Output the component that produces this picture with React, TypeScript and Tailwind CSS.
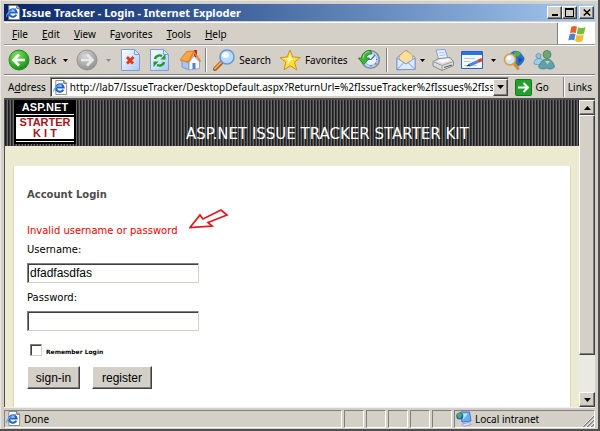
import type { ReactNode } from "react";

type IconProps = {
  className?: string;
};

const PageIcon: React.FC<IconProps> = (props) => {
  return (
    <svg className={props.className} viewBox="0 0 16 16" aria-hidden="true">
      <path d="M3 .5h8.500l3 3v12H3z" fill="#fffdf2" stroke="#8a8778" />
      <path d="M11.500.5v3h3" fill="#d8d4c4" stroke="#555" />
      <path
        d="M11 10.200A4 4 0 1 1 11.300 8H4.500"
        fill="none"
        stroke="#1f5fd0"
        strokeWidth="2.200"
      />
      <path d="M.8 12.500C0 10 5 4.500 11 3.500" fill="none" stroke="#59a6f5" strokeWidth="1.200" />
    </svg>
  );
};

const BackIcon: React.FC<IconProps & { disabled?: boolean }> = (props) => {
  const id = props.disabled ? "arrow-off" : "arrow-on";
  return (
    <svg className={props.className} viewBox="0 0 22 22" aria-hidden="true">
      <defs>
        <radialGradient id={id} cx=".4" cy=".3" r=".75">
          <stop offset="0" stopColor={props.disabled ? "#d6d6d6" : "#8be36a"} />
          <stop offset=".6" stopColor={props.disabled ? "#ababab" : "#36b32a"} />
          <stop offset="1" stopColor={props.disabled ? "#8e8e8e" : "#14801a"} />
        </radialGradient>
      </defs>
      <circle
        cx="11"
        cy="11"
        r="10"
        fill={`url(#${id})`}
        stroke={props.disabled ? "#949494" : "#2c8c27"}
      />
      <path
        d={props.disabled ? "M5 11h11M11 5.500l5.500 5.500-5.500 5.500" : "M17 11H6M11 5.500L5.500 11l5.500 5.500"}
        fill="none"
        stroke={props.disabled ? "#e8e8e8" : "#fff"}
        strokeWidth="2.600"
      />
    </svg>
  );
};

const SheetIcon: React.FC<{ children: ReactNode }> = (props) => {
  return (
    <svg className="h-[22px] w-[19px]" viewBox="0 0 19 22" aria-hidden="true">
      <defs>
        <linearGradient id="sheet" x1="0" y1="0" x2="1" y2="1">
          <stop offset="0" stopColor="#ffffff" />
          <stop offset="1" stopColor="#a9c8f5" />
        </linearGradient>
      </defs>
      <path d="M.5.5h13l5 5v16H.5z" fill="url(#sheet)" stroke="#7f9ed6" />
      <path d="M13.500.5v5h5z" fill="#dbe8fc" stroke="#7f9ed6" />
      {props.children}
    </svg>
  );
};

const HomeIcon = () => {
  return (
    <svg className="h-[22px] w-[22px]" viewBox="0 0 22 22" aria-hidden="true">
      <path d="M15 1h3v7h-3z" fill="#c5281c" />
      <path d="M3 11l7 3v7l-7-3z" fill="#a8c4ee" stroke="#6d8fc9" strokeWidth=".8" />
      <path d="M10 13l5-6 5.500 6v6.500L10 21z" fill="#f3f7ff" stroke="#7c98cb" strokeWidth=".8" />
      <path d="M13.500 14h3v6h-3z" fill="#5c7fc4" />
      <path d="M1 11l6.500-8.500L15 2l-6 11z" fill="#f7a742" stroke="#d9731a" strokeWidth=".8" />
      <path d="M9 13.500L15 3l6.500 9.500" fill="none" stroke="#e8832a" strokeWidth="1.600" />
    </svg>
  );
};

const SearchIcon = () => {
  return (
    <svg className="h-[22px] w-[22px]" viewBox="0 0 22 22" aria-hidden="true">
      <path d="M2 20l7-7" stroke="#a35a1c" strokeWidth="4" strokeLinecap="round" />
      <path d="M2 19.500l6-6" stroke="#f1a95a" strokeWidth="1.800" strokeLinecap="round" />
      <circle cx="14" cy="8" r="7" fill="#b9dcfb" stroke="#6d95d8" strokeWidth="1.600" />
      <ellipse cx="12.500" cy="6" rx="3.500" ry="3" fill="#f2faff" />
    </svg>
  );
};

const StarIcon = () => {
  return (
    <svg className="h-[22px] w-[22px]" viewBox="0 0 22 22" aria-hidden="true">
      <path
        d="M11 1l2.800 7 7.500.6-5.800 4.600 2.300 7.800-6.600-4.300L5 21l1.800-7.800L1 8.600 8.200 8z"
        fill="#ffdc3c"
        stroke="#cf9410"
        strokeLinejoin="round"
      />
      <path d="M11 4l1.500 5.500 4 .5-5 1.500-3 4 .3-4.500-4-1.500 5-.5z" fill="#fff6a8" />
    </svg>
  );
};

const HistoryIcon = () => {
  return (
    <svg className="h-[22px] w-[22px]" viewBox="0 0 22 22" aria-hidden="true">
      <circle cx="12.500" cy="10.500" r="8.800" fill="#b9d4f2" stroke="#7d8ea6" strokeWidth="1.600" />
      <circle cx="13" cy="10.500" r="6" fill="#e6f2ff" stroke="#8fb2e0" strokeWidth="1" />
      <path d="M13 10.500l4-4.500M13 10.500h-3M18 10.500h1M13 16v1.500" stroke="#4b6fae" strokeWidth="1.200" />
      <path d="M17 14l1.500 1.500" stroke="#e2563a" strokeWidth="1.500" />
      <path
        d="M13 1.500C7.500 1 4 4.500 3.500 9H.3l5.500 6.500L11.500 9H8.500c0-2.500 2-4 5-4z"
        fill="#3db53a"
        stroke="#1d7c20"
        strokeWidth=".8"
      />
      <path d="M11 2.800C7.500 3 5.300 5.500 5 9.500" fill="none" stroke="#a6e690" strokeWidth="1" />
    </svg>
  );
};

const MailIcon = () => {
  return (
    <svg className="h-[22px] w-5" viewBox="0 0 20 22" aria-hidden="true">
      <path d="M1 8.500L10 1l9 7.500v11.500l-18 1z" fill="#cfe0fb" stroke="#7b98d4" />
      <path d="M3.500 7l6-5.500 7 4.500v6l-7 3-6-3z" fill="#ffdf9a" stroke="#dba64d" strokeWidth=".8" />
      <path d="M1 9l9 6 9-6v11.500H1z" fill="#dcebff" stroke="#7b98d4" />
      <path d="M1 20.500l7-7M19 20.500l-7-7" stroke="#7b98d4" />
    </svg>
  );
};

const PrintIcon = () => {
  return (
    <svg className="h-[22px] w-[22px]" viewBox="0 0 22 22" aria-hidden="true">
      <path d="M4 1l9-.5 3 9-9 2z" fill="#e9f2ff" stroke="#7fa0dc" />
      <path d="M6.500 4l6-.7M7.500 6.500l6-.7" stroke="#a9c2ec" />
      <path d="M1 12.500l6-3 11-1 3.500 4v4L10 21.500 1 17z" fill="#dcdcdc" stroke="#8a8a8a" />
      <path d="M1 12.500l9 4 11.500-4M10 16.500v5" fill="none" stroke="#9c9c9c" />
      <path d="M5 12l3-1.500 8.500-1 2 2-8 2.500z" fill="#f8f8f8" />
      <path d="M12 18.500l8-2.500" stroke="#555" />
    </svg>
  );
};

const EditIcon = () => {
  return (
    <svg className="h-[18px] w-[22px]" viewBox="0 0 22 18" aria-hidden="true">
      <path d="M.5.500h21v17H.5z" fill="#f4f9ff" stroke="#2163c8" />
      <path d="M1 1h20v3H1z" fill="#2874e0" />
      <path d="M3 7.500h11M3 10.500h6M3 14.500h13" stroke="#b6c6dc" />
      <path d="M8 14.300l9-4" stroke="#4a86e0" strokeWidth="3" />
      <path d="M17 10.300l4-1.800" stroke="#e0402a" strokeWidth="3.200" />
      <path d="M5 15.500l3-2.500 1 2z" fill="#333" />
    </svg>
  );
};

const ResearchIcon = () => {
  return (
    <svg className="h-[22px] w-[22px]" viewBox="0 0 22 22" aria-hidden="true">
      <path d="M6 6C8 2 14 0 18 4l3.500 5c.5 3-4 8-7 8.500L8 14z" fill="#2b6fc9" />
      <path d="M11 3.500L14 2l4 2.500-3 3-4-.5z" fill="#54ad4e" />
      <path d="M15 9l5 1-4 4z" fill="#1c4f9e" />
      <path d="M11.500 15l3.500 4.500" stroke="#d98c25" strokeWidth="3" strokeLinecap="round" />
      <circle cx="7" cy="10.500" r="5.500" fill="#cfe6fb" stroke="#e09f3c" strokeWidth="1.600" />
      <ellipse cx="6" cy="9" rx="2.500" ry="2" fill="#fff" />
    </svg>
  );
};

const MessengerIcon = () => {
  return (
    <svg className="h-5 w-[22px]" viewBox="0 0 22 20" aria-hidden="true">
      <circle cx="5.500" cy="6" r="2.600" fill="#8fc3e0" stroke="#5d93b8" strokeWidth=".8" />
      <path d="M1 14c0-4 2-5.500 5-5.500S10 10 10 12l-3 3z" fill="#9bd0e6" stroke="#5d93b8" strokeWidth=".8" />
      <circle cx="14" cy="4.500" r="4" fill="#6fa86c" stroke="#4a7d67" strokeWidth=".8" />
      <path
        d="M5.500 17C7 14 8.500 9 14 9c4.500 0 7 4.500 7.500 8-2 2.500-6 2.500-8 1-2 1.500-6 1.500-8-1z"
        fill="#5f9fae"
        stroke="#45788c"
        strokeWidth=".8"
      />
      <path d="M12 11l2.500 3.500L17 11z" fill="#b5dc90" />
    </svg>
  );
};

const WindowsLogo = () => {
  return (
    <svg className="h-[18px] w-[18px]" viewBox="0 0 18 18" aria-hidden="true">
      <path d="M3.200 2Q6 .2 9 1.800L7.700 8.200Q5 6.800 2 8.300z" fill="#e8602a" />
      <path d="M10 2.200q3 1.600 7.500-.2L16 8.700q-4 1.600-7.200 0z" fill="#7dbb3c" />
      <path d="M1.700 9.300q3-1.500 5.800-.1L6.200 15.500Q3.500 14 .3 15.600z" fill="#4a7fd6" />
      <path d="M8.600 9.700q3.500 1.500 7.200 0l-1.500 6.600q-4 1.600-7.200-.2z" fill="#f2bc2e" />
    </svg>
  );
};

const NetworkIcon = () => {
  return (
    <svg className="h-4 w-4" viewBox="0 0 16 16" aria-hidden="true">
      <path d="M4.500 1h9l1.500 9-9 1z" fill="#5fb4f7" stroke="#4a6fd0" />
      <path d="M6 2.500h6l-5 6z" fill="#c3e6ff" />
      <path d="M6 13l7-1.500 2 2-7 2z" fill="#d9def4" stroke="#8b8fc4" strokeWidth=".7" />
      <circle cx="3.800" cy="5" r="3.600" fill="#2b62c9" />
      <path d="M1 3l3-1.500 2 2-2 4-2-1z" fill="#49b83c" />
    </svg>
  );
};

const Caret: React.FC<{ disabled?: boolean }> = (props) => {
  return (
    <svg
      className={props.disabled ? "h-[3px] w-[5px] text-[#8c8a84]" : "h-[3px] w-[5px] text-black"}
      viewBox="0 0 5 3"
      aria-hidden="true"
    >
      <path d="M0 0h5L2.500 3z" fill="currentColor" />
    </svg>
  );
};

const raised =
  "border border-t-white border-l-white border-r-[#404040] border-b-[#404040] bg-[#d4d0c8] shadow-[inset_-1px_-1px_0_#808080]";
const sunken =
  "border border-t-[#808080] border-l-[#808080] border-r-[#d4d0c8] border-b-[#d4d0c8] bg-white shadow-[inset_1px_1px_0_#404040]";

const menus = [
  { before: "", key: "F", after: "ile" },
  { before: "", key: "E", after: "dit" },
  { before: "", key: "V", after: "iew" },
  { before: "F", key: "a", after: "vorites" },
  { before: "", key: "T", after: "ools" },
  { before: "", key: "H", after: "elp" },
];

const TitleBar = () => {
  return (
    <header className="flex h-[17px] items-center bg-linear-to-r from-[#0a246a] to-[#a6caf0] pl-0.5 pr-px">
      <PageIcon className="h-[15px] w-[15px]" />
      <h1 className="ml-px grow text-[11px] font-bold leading-4 text-white">
        Issue Tracker - Login - Internet Exploder
      </h1>
      <button aria-label="Minimize" className={`flex h-[13px] w-[15px] items-end justify-center pb-0.5 ${raised}`}>
        <span className="h-0.5 w-1.5 bg-black" />
      </button>
      <button aria-label="Maximize" className={`flex h-[13px] w-[15px] items-center justify-center ${raised}`}>
        <span className="h-[9px] w-[9px] border border-t-2 border-black" />
      </button>
      <button aria-label="Close" className={`ml-0.5 flex h-[13px] w-[15px] items-center justify-center ${raised}`}>
        <svg className="h-[7px] w-2" viewBox="0 0 8 7" aria-hidden="true">
          <path d="M.8.500l6.400 6M7.200.500l-6.400 6" stroke="#000" strokeWidth="1.500" />
        </svg>
      </button>
    </header>
  );
};

const MenuBar = () => {
  return (
    <nav className="mt-px flex h-[23px] border-y border-t-white border-b-[#9a978f]">
      <ul className="flex grow items-center gap-3.5 border-r border-[#808080] pl-2">
        {menus.map((menu) => (
          <li key={menu.key}>
            <button>
              {menu.before}
              <span className="underline underline-offset-1">{menu.key}</span>
              {menu.after}
            </button>
          </li>
        ))}
      </ul>
      <div className="flex w-[37px] items-center justify-center bg-white">
        <WindowsLogo />
      </div>
    </nav>
  );
};

const ToolBar = () => {
  return (
    <div className="flex h-[30px] items-center border-y border-t-white border-b-[#808080] pl-1">
      <button className="flex items-center gap-1">
        <BackIcon className="h-[22px] w-[22px]" />
        Back
      </button>
      <button aria-label="Back history" className="ml-[7px]">
        <Caret />
      </button>
      <button aria-label="Forward" className="ml-2">
        <BackIcon className="h-[22px] w-[22px]" disabled />
      </button>
      <button aria-label="Forward history" className="ml-2">
        <Caret disabled />
      </button>
      <button aria-label="Stop" className="ml-2.5">
        <SheetIcon>
          <path d="M6 8l6 6.500M12.500 8L6 14.500" stroke="#e8341a" strokeWidth="2.800" />
        </SheetIcon>
      </button>
      <button aria-label="Refresh" className="ml-2.5">
        <SheetIcon>
          <path d="M5 10c.5-3 4-4.500 7-3" fill="none" stroke="#1f9a30" strokeWidth="2.400" />
          <path d="M10.500 10.500h5v-5.500z" fill="#1f9a30" />
          <path d="M14 13c-.5 3-4 4.500-7 3" fill="none" stroke="#1f9a30" strokeWidth="2.400" />
          <path d="M8.500 12.500h-5V18z" fill="#1f9a30" />
        </SheetIcon>
      </button>
      <button aria-label="Home" className="ml-2.5">
        <HomeIcon />
      </button>
      <span className="ml-1 h-6 w-0.5 border-l border-[#808080] bg-white" />
      <button className="ml-1.5 flex items-center gap-1">
        <SearchIcon />
        Search
      </button>
      <button className="ml-2 flex items-center gap-1">
        <StarIcon />
        Favorites
      </button>
      <button aria-label="History" className="ml-2.5">
        <HistoryIcon />
      </button>
      <span className="ml-1.5 h-6 w-0.5 border-l border-[#808080] bg-white" />
      <button aria-label="Mail" className="ml-2 flex items-center gap-1">
        <MailIcon />
        <Caret />
      </button>
      <button aria-label="Print" className="ml-[7px]">
        <PrintIcon />
      </button>
      <button aria-label="Edit" className="ml-[7px] flex items-center gap-2">
        <EditIcon />
        <Caret />
      </button>
      <button aria-label="Research" className="ml-[7px]">
        <ResearchIcon />
      </button>
      <button aria-label="Messenger" className="ml-2">
        <MessengerIcon />
      </button>
    </div>
  );
};

const AddressBar = () => {
  return (
    <form className="flex h-[23px] items-center border-t border-white pl-1" onSubmit={(e) => e.preventDefault()}>
      <label htmlFor="address">
        A<span className="underline underline-offset-1">d</span>dress
      </label>
      <div className={`ml-1 flex h-5 grow items-center pl-0.5 ${sunken}`}>
        <PageIcon className="h-[15px] w-[15px] shrink-0" />
        <input
          id="address"
          className="ml-0.5 h-4 w-0 grow outline-none"
          defaultValue="http://lab7/IssueTracker/DesktopDefault.aspx?ReturnUrl=%2fIssueTracker%2fIssues%2fIss"
        />
        <button
          type="button"
          aria-label="Show addresses"
          className={`flex h-[17px] w-[15px] shrink-0 items-center justify-center ${raised}`}
        >
          <svg className="h-1 w-[7px]" viewBox="0 0 7 4" aria-hidden="true">
            <path d="M0 0h7L3.500 4z" />
          </svg>
        </button>
      </div>
      <button className="ml-1.5 flex items-center gap-1">
        <svg className="h-[17px] w-[17px]" viewBox="0 0 17 17" aria-hidden="true">
          <rect x=".5" y=".5" width="16" height="16" rx="1" fill="#22a02c" stroke="#15791c" />
          <path d="M3 8.500h10M8.500 4l4.500 4.500L8.500 13" fill="none" stroke="#fff" strokeWidth="2" />
        </svg>
        Go
      </button>
      <span className="ml-3.5 h-5 w-0.5 border-l border-[#808080] bg-white" />
      <button className="mx-[3px]">Links</button>
    </form>
  );
};

const Banner = () => {
  return (
    <div className="flex h-[46px] shrink-0 bg-[repeating-linear-gradient(90deg,#1e1e1e_0_1px,#3c3c3c_1px_2px,#6c6c6c_2px_3px)] pl-[9px]">
      <div className="flex h-11 w-[62px] flex-col bg-black px-0.5 text-center font-['Liberation_Sans',Arial,sans-serif] text-[11px] font-bold">
        <p className="leading-[14px] text-white">ASP.NET</p>
        <div className="h-px bg-white" />
        <div className="mt-0.5 h-[22px] bg-white leading-[11px] text-[#a81418]">
          <p>STARTER</p>
          <p className="whitespace-pre">K I T</p>
        </div>
        <div className="mt-0.5 h-px bg-white" />
      </div>
      <p className="grow self-end pb-1 pl-[110px] font-['DejaVu_Sans',Verdana,sans-serif] text-[15px] leading-4 text-white">
        ASP.NET ISSUE TRACKER STARTER KIT
      </p>
    </div>
  );
};

const LoginForm = () => {
  return (
    <form
      className="flex grow flex-col items-start border-x border-[#dcd9b0] bg-white px-[13px] pt-[21px] font-['DejaVu_Sans',Verdana,sans-serif] text-[10px] leading-4"
      onSubmit={(e) => e.preventDefault()}
    >
      <h2 className="font-bold text-[#4c4c4c]">Account Login</h2>
      <div className="mt-5 flex">
        <p className="text-[#f00000]">Invalid username or password</p>
        {/* 注目用の矢印 */}
        <div className="relative">
          <svg className="absolute -top-3.5 left-3 h-[22px] w-10" viewBox="0 0 40 22" aria-hidden="true">
            <path
              d="M1 18.500L11 6l3 4L32 1l6 5L19 13.500l4 3.500z"
              fill="#fff"
              stroke="#e8141c"
              strokeWidth="1.700"
            />
          </svg>
        </div>
      </div>
      <label htmlFor="username" className="mt-[3px]">
        Username:
      </label>
      <input
        id="username"
        defaultValue="dfadfasdfas"
        className={`mt-[5px] h-5 w-[172px] px-0.5 font-['Liberation_Sans',Arial,sans-serif] text-xs outline-none ${sunken}`}
      />
      <label htmlFor="password" className="mt-[7px]">
        Password:
      </label>
      <input
        id="password"
        type="password"
        className={`mt-[5px] h-5 w-[172px] px-0.5 font-['Liberation_Sans',Arial,sans-serif] text-xs outline-none ${sunken}`}
      />
      <div className="mt-[13px] flex h-3 items-center gap-1 pl-[3px]">
        <input id="remember" type="checkbox" className={`h-3 w-3 appearance-none ${sunken}`} />
        <label htmlFor="remember" className="pt-1 text-[6px] font-bold">
          Remember Login
        </label>
      </div>
      <div className="mt-2.5 flex gap-3 font-['Liberation_Sans',Arial,sans-serif] text-xs">
        <button className={`h-[23px] w-[53px] ${raised}`}>sign-in</button>
        <button className={`h-[23px] w-[60px] ${raised}`}>register</button>
      </div>
    </form>
  );
};

const ScrollBar = () => {
  return (
    <div className="flex w-4 shrink-0 flex-col bg-[#ebe9e4]">
      <button aria-label="Scroll up" className={`flex h-[15px] items-center justify-center ${raised}`}>
        <svg className="h-1 w-[7px]" viewBox="0 0 7 4" aria-hidden="true">
          <path d="M0 4h7L3.500 0z" />
        </svg>
      </button>
      <div className={`grow-13 ${raised}`} />
      <div className="grow-2" />
      <button aria-label="Scroll down" className={`flex h-[15px] items-center justify-center ${raised}`}>
        <svg className="h-1 w-[7px]" viewBox="0 0 7 4" aria-hidden="true">
          <path d="M0 0h7L3.500 4z" />
        </svg>
      </button>
    </div>
  );
};

const cell = "h-[18px] border border-t-[#808080] border-l-[#808080] border-r-white border-b-white";

const StatusBar = () => {
  return (
    <footer className="flex h-[22px] shrink-0 items-center gap-0.5 border-t border-[#f0eeea]">
      <div className={`flex grow items-center gap-[3px] pl-px ${cell}`}>
        <PageIcon className="h-[15px] w-[15px]" />
        Done
      </div>
      {[1, 2, 3, 4, 5].map((n) => (
        <div key={n} className={`w-5 ${cell}`} />
      ))}
      <div className={`flex w-[141px] items-center gap-[3px] pl-px ${cell}`}>
        <NetworkIcon />
        <span className="grow">Local intranet</span>
        <svg className="h-3 w-3 self-end" viewBox="0 0 12 12" aria-hidden="true">
          <path d="M1 12L12 1M5 12l7-7M9 12l3-3" stroke="#808080" strokeWidth="1.500" />
          <path d="M0 12L12 0M4 12l8-8M8 12l4-4" stroke="#fff" strokeWidth=".7" />
        </svg>
      </div>
    </footer>
  );
};

export default function App() {
  return (
    <div className="flex h-screen flex-col border-r-2 border-b-2 border-[#505050] bg-[#d4d0c8] pt-1 pr-[3px] pl-1 font-['Noto_Sans','Liberation_Sans',sans-serif] text-[10px] leading-4 text-black shadow-[inset_1px_1px_0_#e8e6e0]">
      <TitleBar />
      <MenuBar />
      <ToolBar />
      <AddressBar />
      <main className="flex min-h-0 grow border-t-2 border-l border-[#505050]">
        <div className="flex grow flex-col bg-[#ecead0]">
          <Banner />
          <div className="flex grow flex-col px-2 pt-5">
            <LoginForm />
          </div>
        </div>
        <ScrollBar />
      </main>
      <StatusBar />
    </div>
  );
}
